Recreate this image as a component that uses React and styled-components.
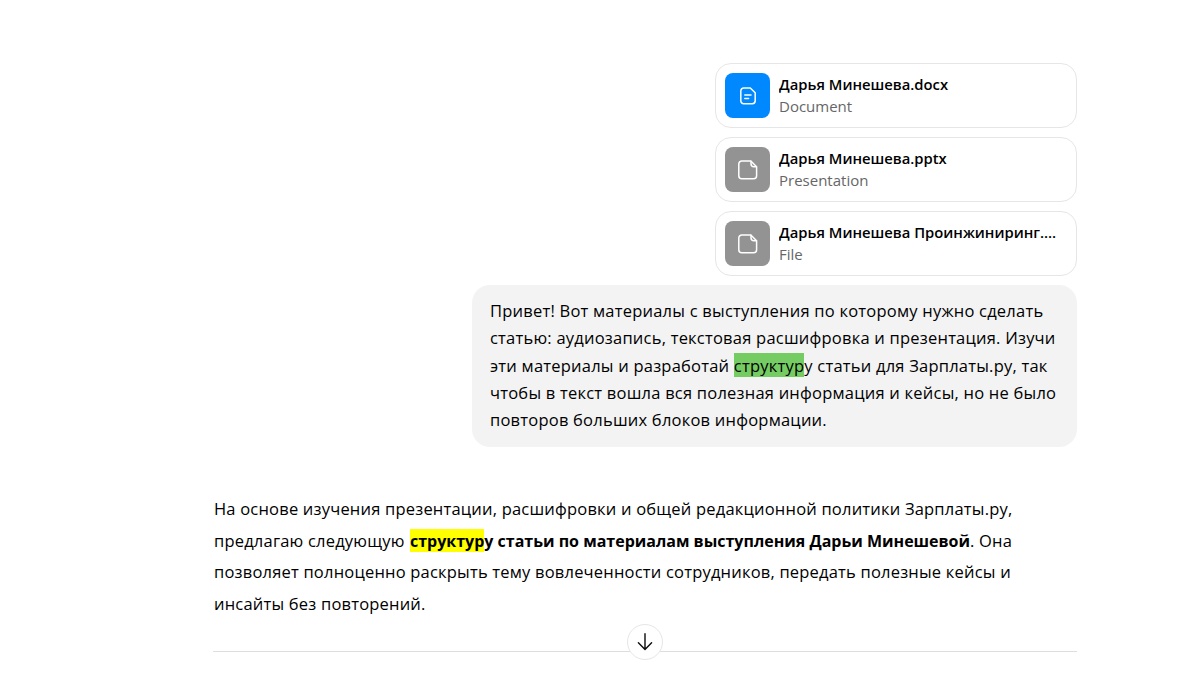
import React from 'react';
import styled, { createGlobalStyle } from 'styled-components';

const files = [
  { name: 'Дарья Минешева.docx', kind: 'Document', type: 'doc' },
  { name: 'Дарья Минешева.pptx', kind: 'Presentation', type: 'file' },
  { name: 'Дарья Минешева Проинжиниринг.pdf', kind: 'File', type: 'file' },
];

const DocIcon = () => (
  <svg width="24" height="24" viewBox="0 0 24 24" fill="none" stroke="#fff" strokeWidth="1.5" strokeLinecap="round" strokeLinejoin="round">
    <path d="M7.7 4h6.6l4.9 4.7v8.1a2.9 2.9 0 0 1-2.9 2.9H7.7a2.9 2.9 0 0 1-2.9-2.9V6.9A2.9 2.9 0 0 1 7.7 4z" />
    <path d="M8.8 11h6.2M8.8 14.4h3.8" />
  </svg>
);

const FileIcon = () => (
  <svg width="24" height="24" viewBox="0 0 24 24" fill="none" stroke="#fff" strokeWidth="1.5" strokeLinecap="round" strokeLinejoin="round">
    <path d="M5.8 3h9l5.8 5.8v8.9a3 3 0 0 1-3 3H5.8a3 3 0 0 1-3-3V6a3 3 0 0 1 3-3z" />
    <path d="M15 3.2v2.6a3 3 0 0 0 3 3h2.4" />
  </svg>
);

const ArrowDown = () => (
  <svg width="20" height="20" viewBox="0 0 20 20" fill="none" stroke="#0d0d0d" strokeWidth="1.4" strokeLinecap="round" strokeLinejoin="round">
    <path d="M10 1.8v15.6M3.4 10.8l6.6 6.6 6.6-6.6" />
  </svg>
);

const App = () => (
  <>
    <GlobalStyle />
    <Page>
      <Thread>
        <UserTurn>
          {files.map((file) => (
            <FileCard key={file.name}>
              <FileTile $type={file.type}>
                {file.type === 'doc' ? <DocIcon /> : <FileIcon />}
              </FileTile>
              <FileInfo>
                <FileName>{file.name}</FileName>
                <FileKind>{file.kind}</FileKind>
              </FileInfo>
            </FileCard>
          ))}
          <Bubble>
            Привет! Вот материалы с выступления по которому нужно сделать статью: аудиозапись,
            текстовая расшифровка и презентация. Изучи эти материалы и разработай{' '}
            <GreenMark>структур</GreenMark>у статьи для Зарплаты.ру, так чтобы в текст вошла вся
            полезная информация и кейсы, но не было повторов больших блоков информации.
          </Bubble>
        </UserTurn>
        <Answer>
          На основе изучения презентации, расшифровки и общей редакционной политики Зарплаты.ру,
          предлагаю следующую{' '}
          <strong>
            <YellowMark>структур</YellowMark>у статьи по материалам выступления Дарьи Минешевой
          </strong>
          . Она позволяет полноценно раскрыть тему вовлеченности сотрудников, передать полезные
          кейсы и инсайты без повторений.
        </Answer>
        <Divider>
          <ScrollButton aria-label="Scroll down">
            <ArrowDown />
          </ScrollButton>
        </Divider>
      </Thread>
    </Page>
  </>
);

const GlobalStyle = createGlobalStyle`
  html, body {
    margin: 0;
    height: 100%;
    overflow: hidden;
    background: #fff;
  }
  body {
    font-family: "Open Sans", "Noto Sans", sans-serif;
    color: #000;
  }
`;

const Page = styled.main`
  height: 675px;
  padding: 63px 118px 0 213px;
  box-sizing: border-box;
`;

const Thread = styled.div`
  width: 864px;
`;

const UserTurn = styled.section`
  display: flex;
  flex-direction: column;
  align-items: flex-end;
  gap: 9px;
`;

const FileCard = styled.div`
  width: 362px;
  height: 65px;
  box-sizing: border-box;
  display: flex;
  align-items: center;
  gap: 9px;
  padding: 0 9px;
  border: 1px solid #e6e6e6;
  border-radius: 16px;
  background: #fff;
`;

const FileTile = styled.div`
  flex: none;
  width: 45px;
  height: 45px;
  display: flex;
  align-items: center;
  justify-content: center;
  border-radius: 8px;
  background: ${(p) => (p.$type === 'doc' ? '#0088ff' : '#939393')};
`;

const FileInfo = styled.div`
  min-width: 0;
  flex: 1;
  padding: 0 9px 2px 0;
`;

const FileName = styled.div`
  font-size: 14.8px;
  font-weight: 600;
  line-height: 22px;
  white-space: nowrap;
  overflow: hidden;
  text-overflow: ellipsis;
`;

const FileKind = styled.div`
  font-size: 15px;
  line-height: 22px;
  color: #666;
`;

const Bubble = styled.div`
  width: 605px;
  height: 162px;
  box-sizing: border-box;
  padding: 12px 18px 0;
  border-radius: 18px;
  background: #f3f3f3;
  font-size: 16.5px;
  letter-spacing: 0.22px;
  line-height: 27.3px;
`;

const GreenMark = styled.mark`
  padding-top: 1px;
  background: #75cc63;
  color: inherit;
`;

const YellowMark = styled.mark`
  padding-top: 1px;
  background: #ffff00;
  color: inherit;
`;

const Answer = styled.p`
  margin: 46px 0 0;
  padding-left: 1px;
  font-size: 16.5px;
  letter-spacing: 0.2px;
  line-height: 31.6px;
  strong {
    margin-left: 1px;
    font-size: 16px;
    line-height: 1;
    font-weight: 700;
    letter-spacing: 0;
  }
`;

const Divider = styled.div`
  position: relative;
  margin-top: 32px;
  height: 1px;
  background: #dedede;
`;

const ScrollButton = styled.button`
  position: absolute;
  left: 50%;
  top: -27px;
  transform: translateX(-50%);
  width: 36px;
  height: 36px;
  padding: 0;
  display: flex;
  align-items: center;
  justify-content: center;
  border: 1px solid #e6e6e6;
  border-radius: 50%;
  background: #fff;
`;

export default App;
